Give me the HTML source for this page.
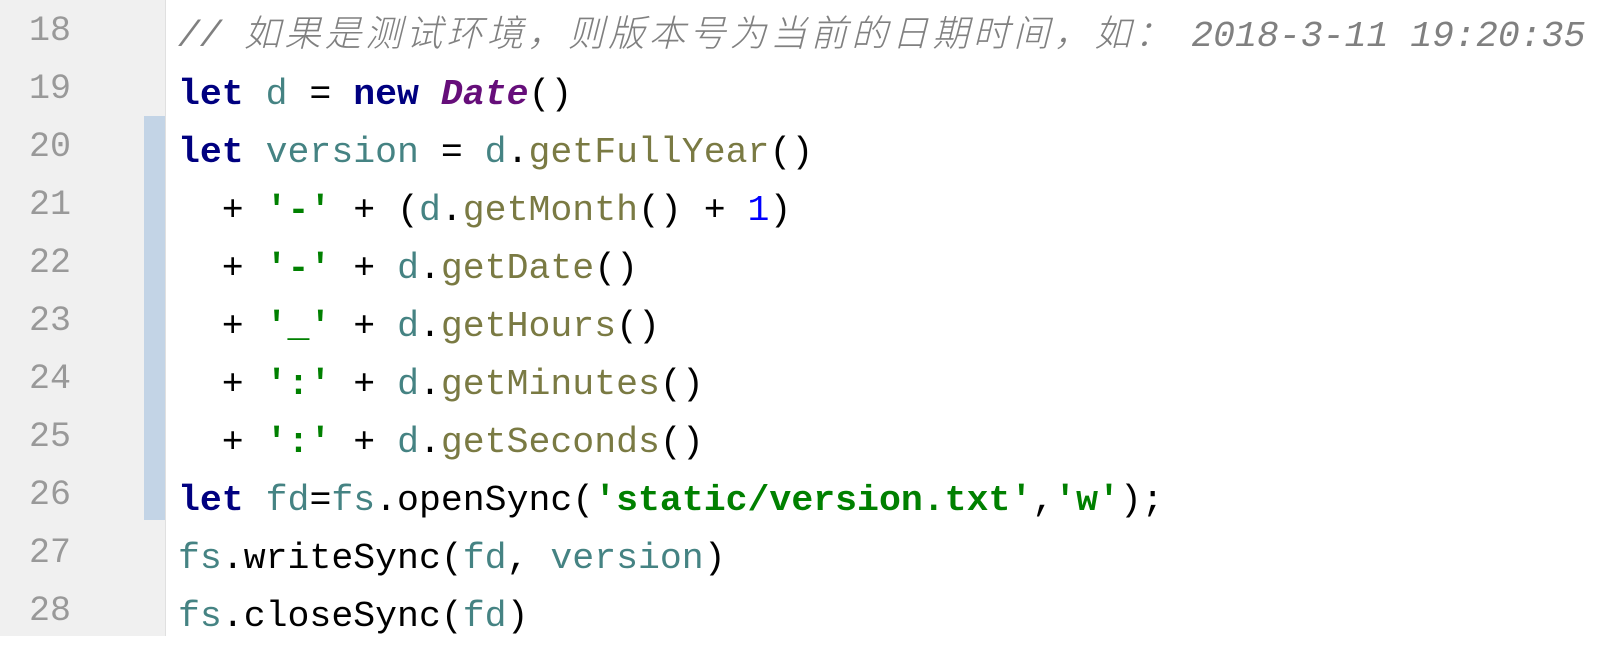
<!DOCTYPE html>
<html><head><meta charset="utf-8"><style>
body{margin:0;width:1604px;height:636px;background:#fff;overflow:hidden;position:relative;font-family:"Liberation Mono","Noto Sans CJK SC",monospace;}
.g{position:absolute;left:0;top:0;width:165px;height:636px;background:#f0f0f0;border-right:1px solid #e0e0e0;}
.bar{position:absolute;left:144px;top:116px;width:21px;height:404px;background:#c3d4e6;}
.ln{position:absolute;left:0;width:71px;text-align:right;color:#999;font-size:35px;line-height:58px;}
.code{position:absolute;left:178px;top:2px;font-size:36.5px;line-height:58px;white-space:pre;color:#000;}
.k{color:#000080;font-weight:bold}.v{color:#458383}.m{color:#7a7a43}.s{color:#008000;font-weight:bold}.n{color:#0000ff}
.c{color:#808080;font-style:italic}.cj{letter-spacing:4px;font-family:"Noto Sans CJK SC",sans-serif;font-weight:300;margin-right:16px}
.D{color:#660e7a;font-weight:bold;font-style:italic}
</style></head><body>
<div class="g"></div><div class="bar"></div>
<div class="ln" style="top:2px">18<br>19<br>20<br>21<br>22<br>23<br>24<br>25<br>26<br>27<br>28</div>
<div class="code"><span class="c">// <span class="cj">如果是测试环境，则版本号为当前的日期时间，如：</span>2018-3-11 19:20:35</span>
<span class="k">let</span> <span class="v">d</span> = <span class="k">new</span> <span class="D">Date</span>()
<span class="k">let</span> <span class="v">version</span> = <span class="v">d</span>.<span class="m">getFullYear</span>()
  + <span class="s">'-'</span> + (<span class="v">d</span>.<span class="m">getMonth</span>() + <span class="n">1</span>)
  + <span class="s">'-'</span> + <span class="v">d</span>.<span class="m">getDate</span>()
  + <span class="s">'_'</span> + <span class="v">d</span>.<span class="m">getHours</span>()
  + <span class="s">':'</span> + <span class="v">d</span>.<span class="m">getMinutes</span>()
  + <span class="s">':'</span> + <span class="v">d</span>.<span class="m">getSeconds</span>()
<span class="k">let</span> <span class="v">fd</span>=<span class="v">fs</span>.openSync(<span class="s">'static/version.txt'</span>,<span class="s">'w'</span>);
<span class="v">fs</span>.writeSync(<span class="v">fd</span>, <span class="v">version</span>)
<span class="v">fs</span>.closeSync(<span class="v">fd</span>)</div>
</body></html>
